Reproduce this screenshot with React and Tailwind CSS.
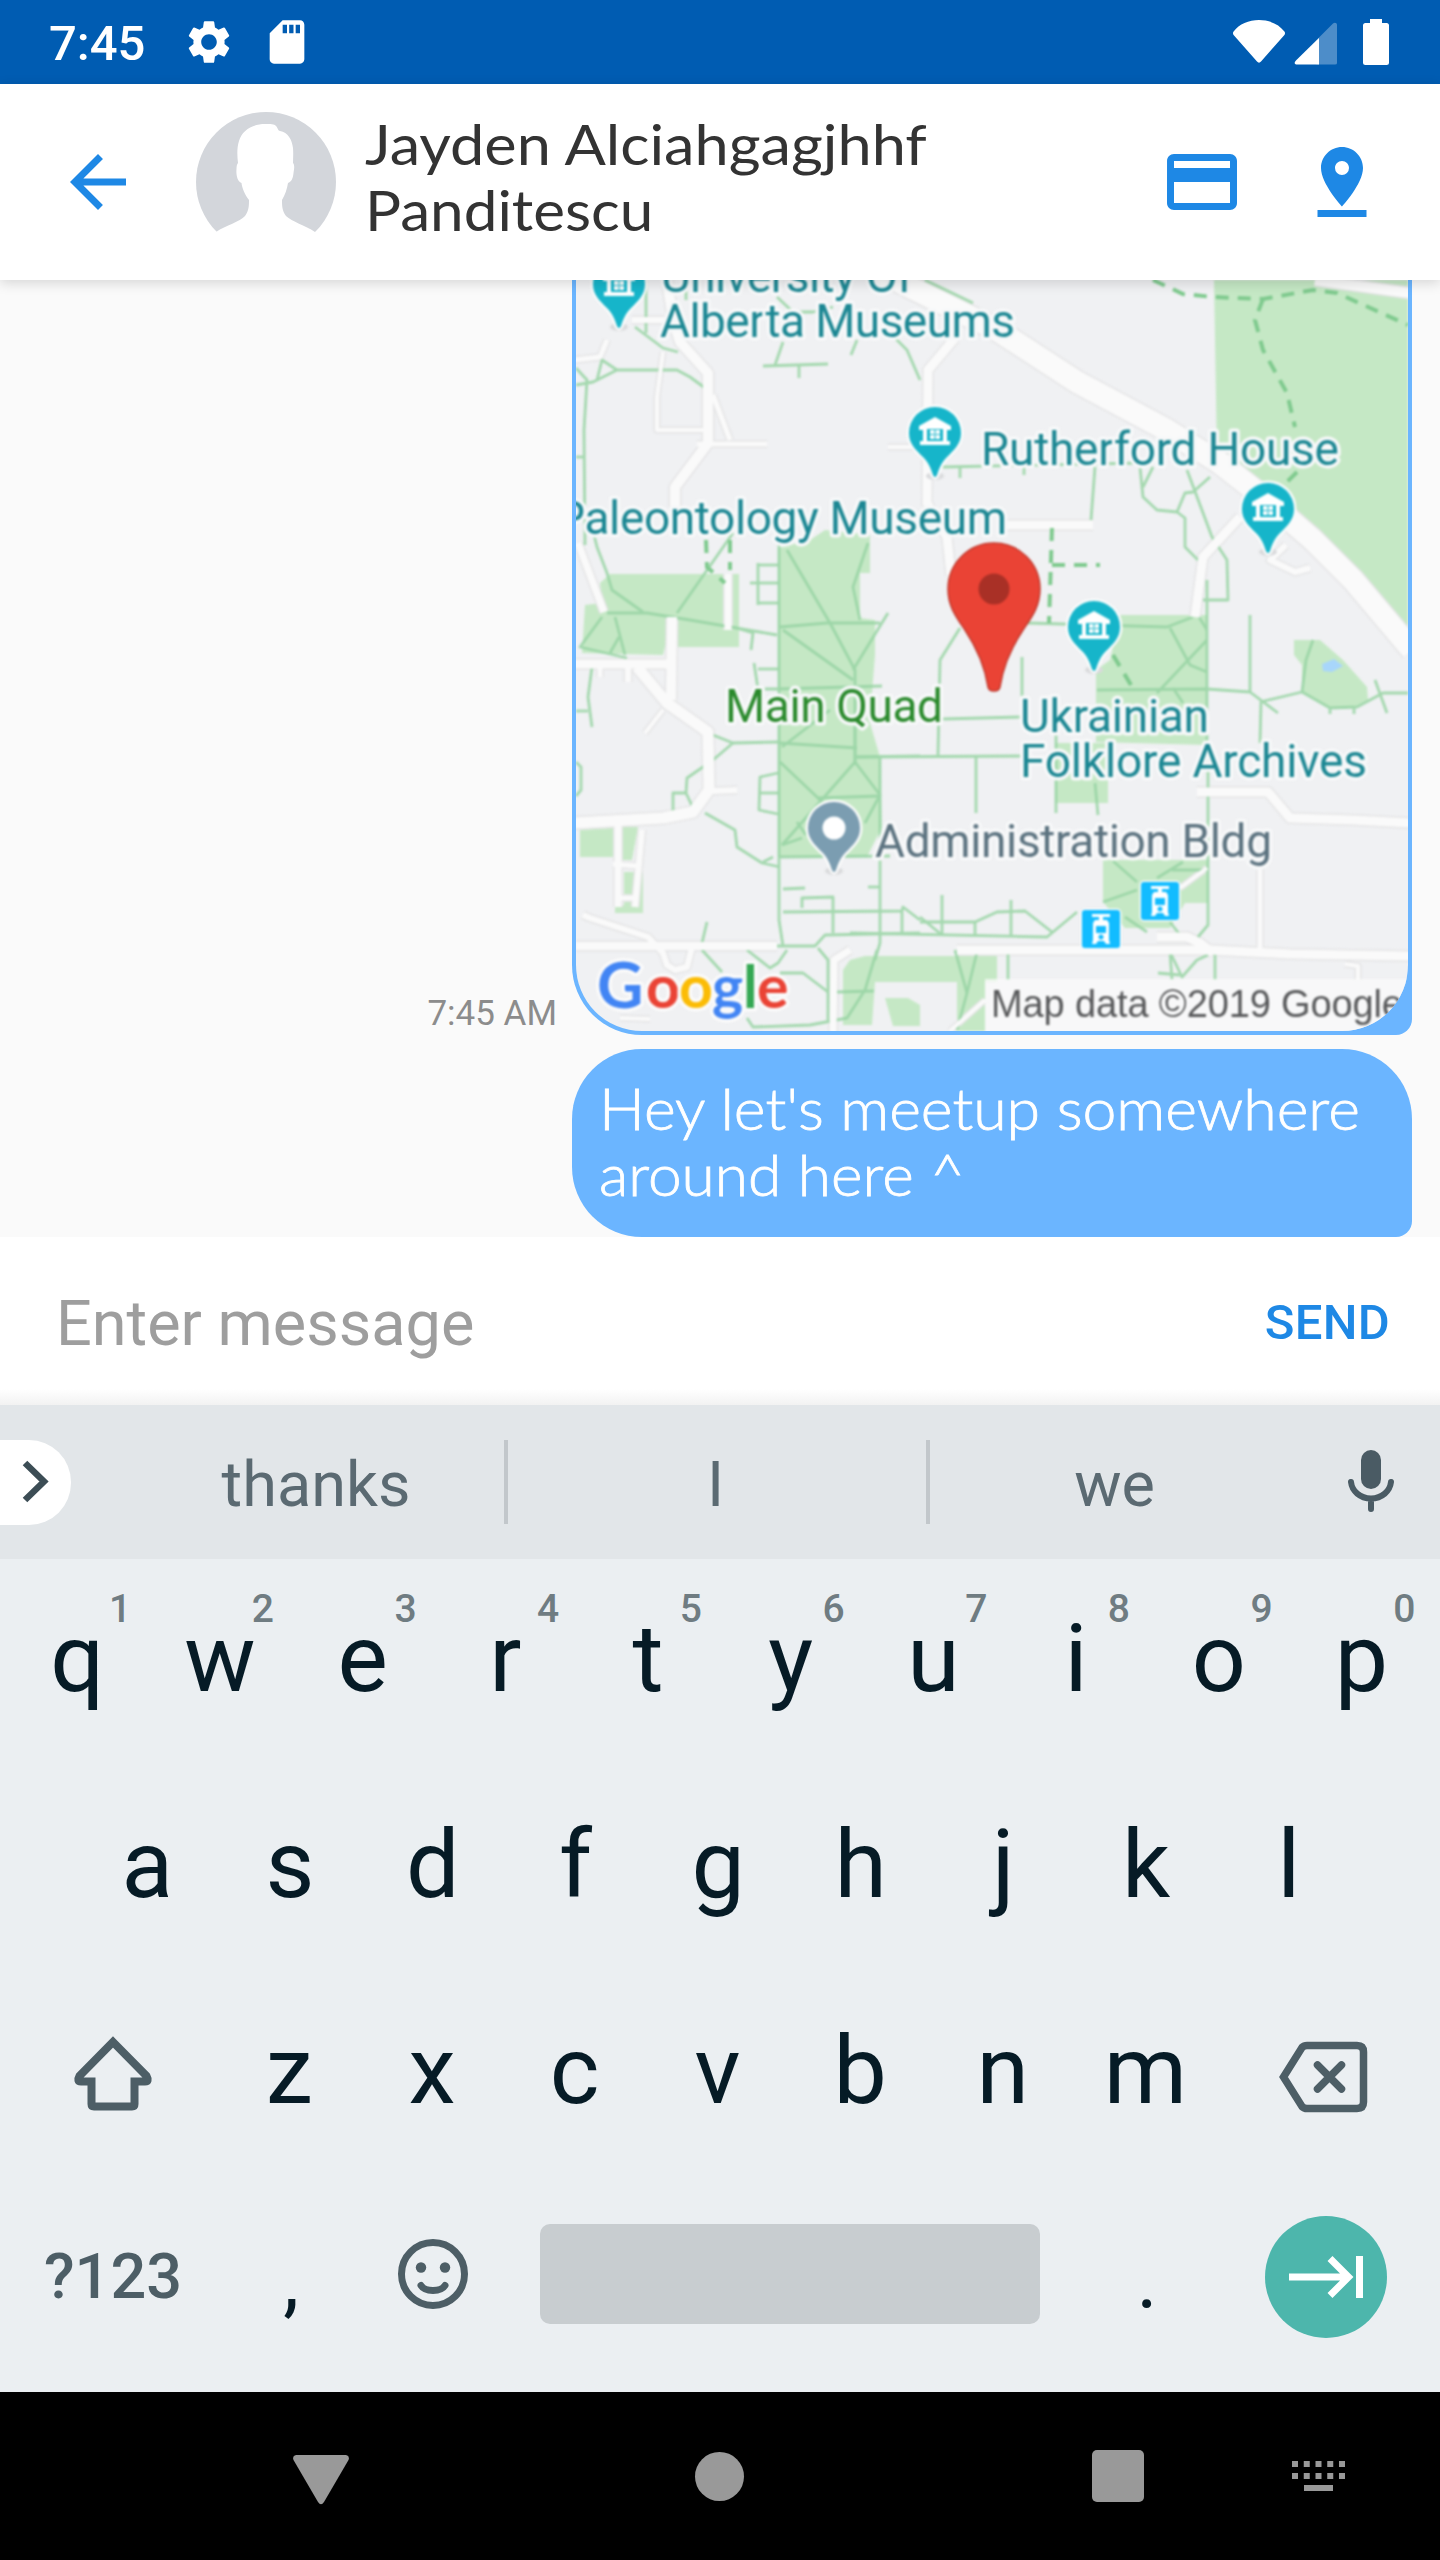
import React from "react";
import { MdSettings, MdSdCard, MdArrowBack, MdCreditCard, MdPinDrop } from "react-icons/md";

function StatusBar() {
  return (
    <div className="flex h-[84px] items-center justify-between bg-[#005cb2] pl-[49px] pr-[51px] text-white">
      <div className="flex items-center">
        <span className="w-[134px] pt-[3px] text-[49px] font-medium leading-[66px]">7:45</span>
        <MdSettings className="size-[52px]" />
        <MdSdCard className="ml-[26px] size-[52px]" />
      </div>
      <div className="flex items-center">
        <svg className="h-[46px] w-[54px]" viewBox="0 0 54 46" fill="currentColor">
          <path d="M1.6 12.6 C7 5 17 1 27 1 C37 1 47 5 52.4 12.6 C53.4 14 53 15 52.4 16 L29 42.5 C27.8 44 26.2 44 25 42.5 L1.6 16 C1 15 .6 14 1.6 12.6Z" />
        </svg>
        <svg className="ml-[8px] h-[46px] w-[43px]" viewBox="0 0 43 46">
          <path d="M2 41.5 39 4.5C40.500 3 43 3.500 43 6V44Q43 45.500 41 45.500H24Z" fill="#4d8dc9" />
          <path d="M25 19V45.500H3.500C0 45.500 0 43.500 2 41.500Z" fill="white" />
        </svg>
        <svg className="ml-[26px] h-[46px] w-[26px]" viewBox="0 0 26 46" fill="currentColor">
          <path d="M7 0H19V4H23.500Q26 4 26 6.500V43.500Q26 46 23.500 46H2.500Q0 46 0 43.500V6.500Q0 4 2.500 4H7Z" />
        </svg>
      </div>
    </div>
  );
}

function Avatar() {
  return (
    <svg className="size-[140px]" viewBox="0 0 140 140">
      <circle cx="70" cy="70" r="70" fill="#d3d6db" />
      <path
        d="M0 140V128L20 120 C30 113 44 110 49 104 C53 99 53 93 53 88 C49 83 46 76 45.500 71 C41 69 40 62 40.500 57 C40.500 54 41 52 42 51 C41 43 41 35 43 29 C46 18 57 12 69 12 C75 12 78 12 80 14 C82 16 82 19 84 19 C92 20 96 28 97 36 C97.500 42 97 47 97 51 C99 53 98 58 97.500 61 C97 67 95 70 92 71 C91 77 89 83 86 88 C86 93 86 99 90 104 C96 110 109 113 119 120 L140 128 V140Z"
        fill="#fff"
      />
    </svg>
  );
}

function Toolbar() {
  return (
    <div className="relative z-10 flex h-[196px] items-center bg-white pl-[56px] pr-[56px] shadow-[0_3px_12px_rgba(0,0,0,0.15)]">
      <MdArrowBack className="size-[84px] text-[#1e88e5]" />
      <div className="ml-[56px]">
        <Avatar />
      </div>
      <div className="ml-[29px] flex-1 pb-[12px] font-[Lato] text-[57px] leading-[66px] text-[#333]">
        <div className="w-fit origin-left scale-x-[1.074]">Jayden Alciahgagjhhf</div>
        <div className="w-fit origin-left scale-x-[1.056]">Panditescu</div>
      </div>
      <MdCreditCard className="size-[84px] text-[#1e88e5]" />
      <MdPinDrop className="ml-[56px] size-[84px] text-[#1e88e5]" />
    </div>
  );
}

const ROADS = [
  [22, "860,262 920,292 997,330 1077,382 1167,430 1220,463 1267,500 1313,540 1353,580 1412,650"],
  [9, "955,338 928,370 927,503 947,537 951,575"],
  [9, "1240,517 1203,557 1195,617"],
  [9, "1000,525 1093,525"],
  [6, "1286,545 1270,560 1295,572 1310,568"],
  [10, "1315,280 1410,293"],
  [9, "1197,792 1268,792 1290,818 1353,820 1410,823"],
  [5, "1260,867 1260,952"],
  [9, "957,950 1210,950 1290,954 1410,956"],
  [9, "1157,937 1187,937 1200,943 1213,953"],
  [8, "576,946 777,946"],
  [9, "574,664 672,664"],
  [10, "672,617 671,700"],
  [11, "637,667 667,703 708,732 709,790 693,812 663,818 574,823"],
  [4, "663,710 645,733"],
  [6, "713,791 737,790"],
  [5, "600,664 600,677"],
  [6, "628,664 628,682"],
  [7, "618,823 618,907"],
  [6, "642,830 635,907"],
  [5, "613,864 637,866"],
  [5, "615,898 637,898"],
  [6, "583,915 590,918 648,937 663,953 667,965 675,970 687,967 692,947"],
  [4, "620,1018 650,1019"],
  [7, "728,574 728,630"],
  [7, "578,543 604,612"],
  [10, "667,280 673,320 680,342 708,373 708,443 675,487 675,507"],
  [5, "713,395 730,440"],
  [5, "697,444 767,444"],
  [4, "663,352 657,397 657,430 703,430"],
  [4, "888,447 925,447"],
  [5, "574,360 600,357 607,340"],
  [6, "632,320 673,320"],
  [4, "985,1000 950,1031"],
  [4, "1207,868 1180,888"],
  [7, "833,1035 834,960 850,950"],
  [4, "1345,964 1358,966 1358,980"],
];

const PARKS = [
  "1214,280 1408,280 1408,637 1333,560 1240,470 1217,457",
  "1120,615 1207,615 1207,745 1096,742 1096,670 1110,660",
  "1055,743 1108,743 1108,803 1055,803",
  "1294,640 1320,640 1343,660 1367,687 1368,700 1353,708 1330,708 1302,692 1302,665 1294,655",
  "1103,860 1208,860 1208,903 1185,903 1170,928 1125,928 1103,902",
  "843,1025 843,970 850,960 865,956 909,956 909,982 875,982 872,1025",
  "885,998 908,998 920,1005 920,1026 893,1026",
  "909,956 997,956 997,982 985,982 985,1031 957,1031 957,982 909,982",
  "778,548 810,540 825,530 870,535 870,573 860,573 860,618 875,620 875,655 873,680 870,723 880,757 882,827 867,857 778,857",
  "610,574 739,574 739,647 677,647 672,617 663,655 582,653 585,605 602,603 600,583",
  "580,830 613,828 613,857 580,857",
  "623,827 638,827 632,860 623,860",
  "624,872 643,872 643,913 615,913 615,905 624,905",
];

const PATHS = [
  "1140,467 1143,497 1157,510 1177,512 1185,518 1185,547 1198,560",
  "1177,512 1185,493 1193,492 1210,477",
  "1187,470 1212,537 1227,560 1228,600 1203,600",
  "1095,467 1091,520",
  "943,467 1140,463",
  "1153,467 1143,487",
  "960,466 960,478",
  "1024,464 1024,475",
  "925,280 973,303",
  "1028,623 1167,627 1193,617",
  "960,628 940,660 938,755",
  "1022,657 1022,717",
  "1250,615 1250,692",
  "1207,580 1207,745",
  "1170,628 1190,665 1207,672",
  "1207,640 1157,693",
  "1199,617 1207,630",
  "1097,690 1207,689 1250,692 1278,713",
  "1173,688 1183,703",
  "1260,702 1302,692 1330,708 1357,707 1383,693 1408,693",
  "1375,680 1387,713",
  "1261,702 1260,743",
  "1302,692 1306,660 1313,640",
  "1330,708 1330,714",
  "1354,708 1354,714",
  "943,719 1020,717",
  "857,757 1020,756",
  "976,757 976,813",
  "1056,730 1056,813",
  "1095,783 1098,815",
  "1208,745 1208,925 1198,937",
  "1113,861 1137,882",
  "1103,902 1137,890",
  "1183,862 1157,878",
  "1208,870 1172,870",
  "1125,917 1147,932",
  "1170,922 1180,935",
  "920,917 942,935",
  "850,933 1047,937 1077,912",
  "920,922 975,922 997,912 1025,911 1052,932",
  "942,895 942,935",
  "975,922 975,935",
  "1011,900 1011,935",
  "955,950 967,993 977,952",
  "967,993 957,1030",
  "1008,952 1008,980",
  "1170,952 1182,977 1197,960 1208,955",
  "1170,952 1172,980",
  "1158,973 1180,975",
  "1215,953 1215,980",
  "592,667 588,697 592,727",
  "576,711 588,711",
  "576,762 581,767 581,790 576,796",
  "713,735 733,743 713,760 687,778 686,793 693,808",
  "673,813 673,793 686,793",
  "733,743 778,742",
  "705,813 735,830 737,847 762,863 780,867",
  "763,862 773,857",
  "778,773 760,777 759,810 778,814",
  "760,793 778,793",
  "779,545 779,920 783,946",
  "787,550 830,623 855,670 855,765",
  "868,543 853,587 860,620",
  "780,627 827,623 880,623",
  "888,613 853,670",
  "783,630 853,680",
  "778,689 882,686",
  "782,747 830,710",
  "780,743 857,748",
  "780,762 817,797 833,813",
  "855,762 782,845",
  "782,845 802,838",
  "855,727 855,762 880,795 865,823",
  "817,798 880,796",
  "880,757 880,943 875,960",
  "855,757 920,756",
  "778,857 890,856",
  "797,822 806,835",
  "758,563 758,605",
  "758,565 778,565",
  "750,583 778,583",
  "758,603 778,603",
  "751,650 753,633 733,627",
  "754,663 758,689 778,689",
  "758,669 778,669",
  "733,533 677,613",
  "594,535 597,547 607,573 612,590 643,612",
  "607,613 647,613 690,620 777,635",
  "602,617 580,647 627,658",
  "615,617 625,655",
  "619,637 610,653",
  "635,327 663,348 678,352",
  "576,385 593,382 617,370 677,370 690,377 705,388",
  "597,380 602,360 617,370",
  "576,368 587,380 584,430 585,545",
  "576,457 585,457",
  "783,342 775,365",
  "763,366 828,364",
  "799,366 799,378",
  "895,338 907,350 920,380",
  "857,340 851,355",
  "777,297 793,312 813,312 833,307",
  "707,922 702,943",
  "702,950 722,972",
  "747,950 770,968 778,963 787,950",
  "775,946 815,946 825,935 920,933",
  "818,948 828,960 828,1020",
  "783,912 902,911 903,907 920,920",
  "802,908 802,898 833,897 833,933",
  "783,889 805,888",
  "868,887 880,887",
  "902,912 902,932",
  "780,973 803,973 828,992",
  "747,1018 753,1027 810,1025 847,1018 865,990 877,950",
  "837,992 874,991",
  "646,280 646,333",
  "686,280 686,300",
];

const DASHED = [
  "1153,280 1183,294 1213,297 1263,299 1313,290 1337,293 1408,325",
  "1263,299 1255,320 1263,350 1287,393 1295,427",
  "1297,472 1286,483",
  "1052,528 1049,623",
  "1052,565 1100,565",
  "1113,655 1131,685",
  "706,540 707,567 725,583",
  "730,540 730,570",
];

const LABELS = [
  { x: 661, y: 292, w: 252, t: "University Of", c: "#1b8793" },
  { x: 660, y: 337, w: 355, t: "Alberta Museums", c: "#1b8793" },
  { x: 981, y: 465, w: 358, t: "Rutherford House", c: "#1b8793" },
  { x: 556, y: 534, w: 451, t: "Paleontology Museum", c: "#1b8793" },
  { x: 725, y: 722, w: 218, t: "Main Quad", c: "#2a8a2c" },
  { x: 1020, y: 732, w: 189, t: "Ukrainian", c: "#1b8793" },
  { x: 1020, y: 777, w: 347, t: "Folklore Archives", c: "#1b8793" },
  { x: 875, y: 857, w: 397, t: "Administration Bldg", c: "#5c7380" },
];

function Pin({ x, y, color, children }) {
  return (
    <g transform={`translate(${x} ${y})`}>
      <ellipse cx="0" cy="43" rx="9" ry="4" fill="#d9dadc" />
      <path
        d="M0 -26A26 26 0 0 1 26 0C26 11 19 17 12 24C6 30 4 36 2 42Q0 46 -2 42C-4 36 -6 30 -12 24C-19 17 -26 11 -26 0A26 26 0 0 1 0 -26Z"
        fill={color}
        stroke="#fafbfb"
        strokeWidth="5"
        paintOrder="stroke"
      />
      {children}
    </g>
  );
}

function MuseumPin({ x, y }) {
  return (
    <Pin x={x} y={y} color="#16b5ca">
      <path d="M0 -16 16 -7V-3H-16V-7Z" fill="#fff" />
      <path d="M-12 -4H12V8H15V12H-15V8H-12Z" fill="#fff" />
      <rect x="-8" y="-4" width="16" height="12" fill="#16b5ca" />
      <rect x="-5" y="-3" width="10" height="9" fill="#fff" />
      <path d="M0 -3V6M-5 1.500H5" stroke="#5fcbd9" strokeWidth="1.500" />
    </Pin>
  );
}

function Transit({ x, y }) {
  return (
    <g transform={`translate(${x} ${y})`}>
      <rect width="38" height="38" rx="3" fill="#12bcff" stroke="#f7fafc" strokeWidth="3" paintOrder="stroke" />
      <path d="M10 4H28V7H21V10H25L27 13V30L28 34H24L22 31H16L14 34H10L11 30V13L13 10H17V7H10Z" fill="#fff" />
      <rect x="14" y="16" width="10" height="7" fill="#12bcff" />
      <circle cx="19" cy="27" r="2.500" fill="#12bcff" />
    </g>
  );
}

function CampusMap() {
  return (
    <svg className="block h-[751px] w-[832px]" viewBox="576 280 832 751">
      <rect x="576" y="280" width="832" height="751" fill="#f0f1f3" />
      <g className="blur-[0.8px]">
        {PARKS.map((p) => (
          <polygon key={p} points={p} fill="#c5e8c5" />
        ))}
        {ROADS.map(([w, p]) => (
          <polyline key={p} points={p} fill="none" stroke="#e4e4e5" strokeWidth={w + 3} strokeLinejoin="round" />
        ))}
        <g fill="none" stroke="#97d4a3" strokeWidth="2.8" strokeLinejoin="round" opacity="0.85">
          {PATHS.map((p) => (
            <polyline key={p} points={p} />
          ))}
        </g>
        {ROADS.map(([w, p]) => (
          <polyline key={p} points={p} fill="none" stroke="#fafafa" strokeWidth={w} strokeLinejoin="round" />
        ))}
        <g fill="none" stroke="#7fca8e" strokeWidth="4" strokeDasharray="13 9">
          {DASHED.map((p) => (
            <polyline key={p} points={p} />
          ))}
        </g>
        <polygon points="1322,664 1334,659 1343,666 1332,672 1323,671" fill="#a8d6fb" />

        <MuseumPin x={619} y={284} />
        <MuseumPin x={935} y={433} />
        <MuseumPin x={1268} y={509} />
        <MuseumPin x={1094} y={627} />
        <Pin x={834} y={828} color="#7b9db1">
          <circle r="11.500" fill="#fff" />
        </Pin>
        <path
          d="M994 543A46 46 0 0 1 1040 589C1040 607 1031 618 1023 630C1011 648 1003 667 1000 687Q999 691 994 691Q989 691 988 687C985 667 977 648 965 630C957 618 948 607 948 589A46 46 0 0 1 994 543Z"
          fill="#ea4335"
          stroke="#c2392d"
          strokeWidth="1.500"
        />
        <circle cx="994" cy="589" r="15.500" fill="#a93026" />
        <Transit x={1141} y={882} />
        <Transit x={1082} y={910} />

        <g fontFamily="Roboto, sans-serif" fontSize="46" stroke="#f7f8f9" strokeWidth="7" strokeLinejoin="round" paintOrder="stroke">
          {LABELS.map((l) => (
            <text key={l.t} x={l.x} y={l.y} textLength={l.w} fill={l.c}>
              {l.t}
            </text>
          ))}
        </g>

        <g fontFamily="Lato, sans-serif" fontWeight="700" fontSize="59" stroke="#fafafa" strokeWidth="7" strokeLinejoin="round" paintOrder="stroke">
          <text y="1008">
            <tspan x="597" fill="#4285f4" fontSize="64">G</tspan>
            <tspan x="646" fill="#ea4335">o</tspan>
            <tspan x="679" fill="#fbbc05">o</tspan>
            <tspan x="712" fill="#4285f4">g</tspan>
            <tspan x="743" fill="#34a853">l</tspan>
            <tspan x="757" fill="#ea4335">e</tspan>
          </text>
        </g>

        <rect x="985" y="979" width="440" height="60" fill="#fafafa" opacity="0.78" />
        <text x="991" y="1017" textLength="412" fontFamily="'Liberation Sans', Arial, sans-serif" fontSize="38" fill="#58595b">
          Map data ©2019 Google
        </text>
      </g>
    </svg>
  );
}

function Chat() {
  return (
    <div className="flex h-[957px] flex-col items-end overflow-hidden bg-[#fafafa] pr-[28px]">
      <div className="flex items-end">
        <span className="mr-[15px] pb-[1px] text-[35px] leading-[41px] text-[#8c8c8c]">7:45 AM</span>
        <div className="rounded-bl-[70px] rounded-br-[16px] bg-[#6bb5ff] px-[4px] pb-[4px]">
          <div className="overflow-hidden rounded-b-[66px]">
            <CampusMap />
          </div>
        </div>
      </div>
      <div className="mt-[14px] h-[188px] w-[840px] rounded-[70px] rounded-br-[16px] bg-[#6bb5ff] pl-[27px] pt-[26px] font-[Lato] text-[57px] font-light leading-[66px] text-white [-webkit-text-stroke:0.8px_white]">
        <div className="w-fit origin-left scale-x-[1.066]">Hey let's meetup somewhere</div>
        <div className="w-fit origin-left scale-x-[1.06]">around here ^</div>
      </div>
    </div>
  );
}

function InputBar() {
  return (
    <div className="flex h-[168px] items-center justify-between bg-[linear-gradient(#fff_0,#fff_152px,#f2f2f2_168px)] pl-[56px] pr-[50px]">
      <span className="pt-[5px] text-[63px] leading-[74px] text-[#9e9e9e]">Enter message</span>
      <span className="pt-[4px] text-[49px] font-medium leading-[58px] tracking-[0.3px] text-[#1e88e5]">SEND</span>
    </div>
  );
}

function Suggestions() {
  return (
    <div className="flex h-[154px] items-center bg-[#e2e6e9] text-[63px] leading-[74px] text-[#5b6a72]">
      <div className="flex h-[85px] w-[71px] items-center rounded-r-[42px] bg-white pl-[20px]">
        <svg className="h-[48px] w-[32px]" viewBox="0 0 32 48" fill="none" stroke="#3c4d55" strokeWidth="6.500">
          <path d="M5 5 24 23.500 5 42" />
        </svg>
      </div>
      <span className="ml-[57px] w-[376px] pt-[5px] text-center">thanks</span>
      <div className="h-[84px] w-[4px] bg-[#c2c7cb]" />
      <span className="w-[418px] pr-[3px] pt-[5px] text-center">I</span>
      <div className="h-[84px] w-[4px] bg-[#c2c7cb]" />
      <span className="w-[369px] pt-[5px] text-center">we</span>
      <svg className="ml-[48px] h-[64px] w-[48px]" viewBox="0 0 48 64">
        <rect x="14" y="0" width="20" height="39" rx="10" fill="#4a5b64" />
        <path d="M4 32C5 41 13 48.500 24 48.500C35 48.500 43 41 44 32M24 49V59" fill="none" stroke="#4a5b64" strokeWidth="6" strokeLinecap="round" />
      </svg>
    </div>
  );
}

function Key({ label, hint }) {
  return (
    <div className="relative flex w-[142.700px] justify-center">
      {label}
      {hint && (
        <span className="absolute -top-[17px] left-[103px] text-[39px] font-medium leading-[46px] text-[#6f7c82]">{hint}</span>
      )}
    </div>
  );
}

function Keyboard() {
  return (
    <div className="h-[833px] bg-[#ebeff2] text-[95px] leading-[112px] text-[#061b26]">
      <div className="flex h-[206px] pl-[6px] pt-[44px]">
        {"qwertyuiop".split("").map((k, i) => (
          <Key key={k} label={k} hint={String((i + 1) % 10)} />
        ))}
      </div>
      <div className="flex h-[206px] pl-[76px] pt-[44px]">
        {"asdfghjkl".split("").map((k) => (
          <Key key={k} label={k} />
        ))}
      </div>
      <div className="flex h-[206px] pt-[44px]">
        <div className="flex w-[218px] pl-[73px] pt-[19px]">
          <svg className="h-[78px] w-[80px]" viewBox="0 0 80 78" fill="none" stroke="#4d5e66" strokeWidth="8">
            <path d="M40 8 73.500 42Q76.500 47.500 72 47.500H61.500V70Q61.500 72.500 59 72.500H21Q18.500 72.500 18.500 70V47.500H8Q3.500 47.500 6.500 42Z" />
          </svg>
        </div>
        {"zxcvbnm".split("").map((k) => (
          <Key key={k} label={k} />
        ))}
        <div className="pl-[62px] pt-[26px]">
          <svg className="h-[72px] w-[90px]" viewBox="0 0 90 72" fill="none" stroke="#4d5e66" strokeWidth="7.500">
            <path d="M4.500 36 23 6.500Q25 4.500 28 4.500H78Q84.500 4.500 84.500 11V61Q84.500 67.500 78 67.500H28Q25 67.500 23 65.500Z" />
            <path d="M38.500 24 62.500 48M62.500 24 38.500 48" strokeLinecap="round" />
          </svg>
        </div>
      </div>
      <div className="flex h-[170px] items-center pt-[24px]">
        <span className="w-[226px] pt-[6px] text-center text-[63px] font-medium leading-[74px] text-[#4d5e66]">?123</span>
        <span className="w-[130px] pt-[13px] text-center text-[80px] leading-[94px]">,</span>
        <svg className="ml-[41px] size-[72px]" viewBox="0 0 72 72" fill="none" stroke="#4d5e66" strokeWidth="7">
          <circle cx="36" cy="36" r="31.500" />
          <path d="M24 47.500C28 54 44 54 48 47.500" strokeLinecap="round" />
          <circle cx="24" cy="29.500" r="5.200" fill="#4d5e66" stroke="none" />
          <circle cx="48" cy="29.500" r="5.200" fill="#4d5e66" stroke="none" />
        </svg>
        <div className="ml-[71px] h-[100px] w-[500px] rounded-[10px] bg-[#c8cdd0]" />
        <span className="w-[214px] pt-[13px] text-center text-[80px] leading-[94px]">.</span>
        <div className="ml-[11px] mt-[5px] flex size-[122px] items-center justify-center rounded-full bg-[#4db6ac]">
          <svg className="h-[46px] w-[78px]" viewBox="0 0 78 46" fill="none" stroke="#fff" strokeWidth="7">
            <path d="M2 23H60M43 4.500 61.500 23 43 41.500M72.500 2V44" />
          </svg>
        </div>
      </div>
    </div>
  );
}

function NavBar() {
  return (
    <div className="flex h-[168px] items-center bg-black pl-[293px] text-[#999]">
      <svg className="mt-[7px] h-[50px] w-[56px]" viewBox="0 0 56 50" fill="currentColor">
        <path d="M3 0H53Q57 1 55.500 5L31 47Q28 51.500 25 47L.5 5Q-1 1 3 0Z" />
      </svg>
      <div className="ml-[346px] size-[49px] rounded-full bg-[#999]" />
      <div className="ml-[348px] size-[52px] rounded-[5px] bg-[#999]" />
      <svg className="ml-[148px] h-[30px] w-[53px]" viewBox="0 0 53 30" fill="currentColor">
        {[0, 1, 2, 3, 4].map((i) => (
          <g key={i}>
            <rect x={i * 11.75} y="0" width="6" height="6" />
            <rect x={i * 11.75} y="12" width="6" height="6" />
          </g>
        ))}
        <rect x="12" y="24" width="29" height="6" />
      </svg>
    </div>
  );
}

export default function App() {
  return (
    <div className="flex h-[2560px] w-[1440px] flex-col overflow-hidden font-[Roboto,sans-serif]">
      <StatusBar />
      <Toolbar />
      <Chat />
      <InputBar />
      <Suggestions />
      <Keyboard />
      <NavBar />
    </div>
  );
}
